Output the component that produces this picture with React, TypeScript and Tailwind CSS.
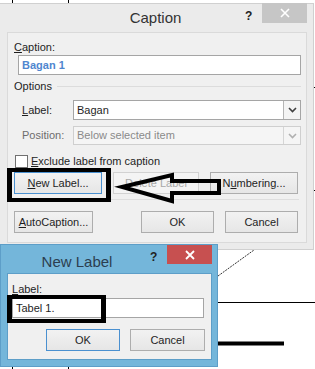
import React from "react";

const font = { fontFamily: '"Liberation Sans", Arial, sans-serif' };

function Btn({
  children,
  w,
  focused,
  disabled,
}: {
  children: React.ReactNode;
  w: string;
  focused?: boolean;
  disabled?: boolean;
}) {
  return (
    <div
      className={
        "h-[22px] flex items-center justify-center border text-[11px] bg-gradient-to-b from-[#f2f2f2] to-[#e6e6e6] " +
        w +
        " " +
        (focused
          ? "border-[#4a90d0] text-[#1e1e1e]"
          : disabled
          ? "border-[#d2d2d2] text-[#a8a8a8] from-[#f4f4f4] to-[#f4f4f4]"
          : "border-[#adadad] text-[#1e1e1e]")
      }
    >
      {children}
    </div>
  );
}

function Chevron({ color }: { color: string }) {
  return (
    <svg width="9" height="6" viewBox="0 0 9 6">
      <path d="M1 1 L4.5 4.5 L8 1" fill="none" stroke={color} strokeWidth="1.6" />
    </svg>
  );
}

function CaptionWindow() {
  return (
    <div
      className="absolute left-0 top-[3px] w-[314px] h-[247px] bg-[#ebebeb] border-t border-r border-b border-[#d0d0d0] flex flex-col"
      style={font}
    >
      <div className="relative h-[28px] flex items-center pl-[72px]">
        <div className="flex-1 text-center text-[15px] text-[#333333] pr-[2px]">Caption</div>
        <div className="w-[72px]" />
        <div className="absolute right-[6px] top-[-1px] flex items-start">
          <div className="w-[15px] text-[12px] font-bold text-[#222] mt-[4px]">?</div>
          <div className="w-[45px] h-[20px] bg-[#c6c6c6] ml-[2px] flex items-center justify-center">
            <svg width="10" height="10" viewBox="0 0 10 10">
              <path d="M1 1 L9 9 M9 1 L1 9" stroke="#ffffff" strokeWidth="1.6" />
            </svg>
          </div>
        </div>
      </div>
      <div className="ml-[7px] mr-[6px] border border-[#dadada] bg-[#f0f0f0] h-[211px] flex flex-col text-[11px] text-[#1e1e1e]">
        <div className="pl-[6px] pt-[6px] h-[22px] leading-[16px]">
          <span className="underline">C</span>aption:
        </div>
        <div className="ml-[10px] mr-[5px] h-[20px] bg-white border border-[#a5a5a5] flex items-center pl-[3px] font-bold text-[#4f86cf]">
          Bagan 1
        </div>
        <div className="mt-[3px] h-[16px] pl-[6px] flex items-center">
          <span>Options</span>
          <div className="flex-1 ml-[5px] mr-[5px] h-px bg-[#dcdcdc]" />
        </div>
        <div className="mt-[6px] h-[20px] flex items-center">
          <div className="w-[65px] pl-[14px]">
            <span className="underline">L</span>abel:
          </div>
          <div className="flex-1 mr-[5px] h-[20px] bg-white border border-[#a5a5a5] flex items-stretch">
            <div className="flex-1 flex items-center pl-[3px]">Bagan</div>
            <div className="w-[17px] border-l border-[#b5b5b5] bg-[#f4f4f4] flex items-center justify-center">
              <Chevron color="#404040" />
            </div>
          </div>
        </div>
        <div className="mt-[6px] h-[19px] flex items-center">
          <div className="w-[65px] pl-[14px] text-[#6d6d6d]">Position:</div>
          <div className="flex-1 mr-[5px] h-[19px] bg-[#f5f5f5] border border-[#cfcfcf] flex items-stretch text-[#8a8a8a]">
            <div className="flex-1 flex items-center pl-[3px]">Below selected item</div>
            <div className="w-[17px] border-l border-[#d5d5d5] flex items-center justify-center">
              <Chevron color="#b0b0b0" />
            </div>
          </div>
        </div>
        <div className="mt-[8px] h-[16px] flex items-center pl-[7px]">
          <div className="w-[13px] h-[13px] bg-white border border-[#707070]" />
          <div className="ml-[3px]">
            <span className="underline">E</span>xclude label from caption
          </div>
        </div>
        <div className="mt-[3px] flex pl-[6px] gap-[11px]">
          <Btn w="w-[88px]" focused>
            <span className="underline">N</span>ew Label...
          </Btn>
          <Btn w="w-[86px]" disabled>
            Delete Label
          </Btn>
          <Btn w="w-[88px]">
            N<span className="underline">u</span>mbering...
          </Btn>
        </div>
        <div className="mt-[5px] ml-[6px] mr-[7px] h-px bg-[#dedede]" />
        <div className="mt-[11px] flex pl-[6px]">
          <Btn w="w-[79px]">
            <span className="underline">A</span>utoCaption...
          </Btn>
          <div className="w-[48px]" />
          <Btn w="w-[73px]">OK</Btn>
          <div className="w-[11px]" />
          <Btn w="w-[73px]">Cancel</Btn>
        </div>
      </div>
    </div>
  );
}

function NewLabelWindow() {
  return (
    <div
      className="absolute left-0 top-[244px] w-[218px] h-[123px] bg-[#74b6da] border border-[#5d9ec8] flex flex-col"
      style={font}
    >
      <div className="h-[28px] flex items-start">
        <div className="flex-1 text-center text-[15px] text-[#2c3e50] mt-[6px] pl-[3px]">New Label</div>
        <div className="w-[14px] text-[12px] font-bold text-[#222] mt-[3px]">?</div>
        <div className="w-[45px] h-[19px] bg-[#c75050] mr-[5px] ml-[3px] flex items-center justify-center">
          <svg width="10" height="10" viewBox="0 0 10 10">
            <path d="M1 1 L9 9 M9 1 L1 9" stroke="#ffffff" strokeWidth="1.8" />
          </svg>
        </div>
      </div>
      <div className="ml-[6px] mr-[5px] h-[87px] bg-[#f0f0f0] border border-[#5d9ec8] flex flex-col text-[11px] text-[#1e1e1e]">
        <div className="pl-[4px] pt-[8px] h-[24px] leading-[14px]">
          <span className="underline">L</span>abel:
        </div>
        <div className="ml-[4px] mr-[7px] h-[20px] bg-white border border-[#a5a5a5] flex items-center pl-[3px]">
          Tabel 1.
        </div>
        <div className="mt-[11px] flex pl-[38px]">
          <Btn w="w-[74px]" focused>
            OK
          </Btn>
          <div className="w-[10px]" />
          <Btn w="w-[75px]">Cancel</Btn>
        </div>
      </div>
    </div>
  );
}

export default function App() {
  return (
    <div className="relative w-[315px] h-[369px] bg-white overflow-hidden">
      <svg className="absolute left-0 top-0" width="315" height="369">
        <line x1="12.5" y1="0" x2="12.5" y2="4" stroke="#000" />
        <line x1="68.5" y1="0" x2="68.5" y2="4" stroke="#000" />
        <line x1="12.5" y1="366" x2="12.5" y2="369" stroke="#000" />
        <line x1="68.5" y1="366" x2="68.5" y2="369" stroke="#000" />
        <line x1="313" y1="87.5" x2="315" y2="87.5" stroke="#000" />
        <line x1="313" y1="190.5" x2="315" y2="190.5" stroke="#000" />
        <line x1="218" y1="276" x2="254" y2="250" stroke="#333" strokeWidth="1" strokeDasharray="2 1" />
        <line x1="218" y1="302.5" x2="315" y2="302.5" stroke="#000" />
        <line x1="218" y1="343.5" x2="284" y2="343.5" stroke="#000" strokeWidth="4" />
      </svg>
      <CaptionWindow />
      <NewLabelWindow />
      {/* highlight boxes */}
      <div className="absolute left-[7px] top-[168px] w-[104px] h-[34px] border-y-4 border-x-[5px] border-black" />
      <div className="absolute left-[7px] top-[295px] w-[99px] h-[28px] border-y-[4px] border-x-[5px] border-black" />
      <svg className="absolute left-0 top-0 pointer-events-none" width="315" height="369">
        <polygon
          points="122,187 172,175 172,181 219,181 219,193 172,193 172,201"
          fill="none"
          stroke="#000"
          strokeWidth="4"
          strokeLinejoin="miter"
        />
      </svg>
    </div>
  );
}
